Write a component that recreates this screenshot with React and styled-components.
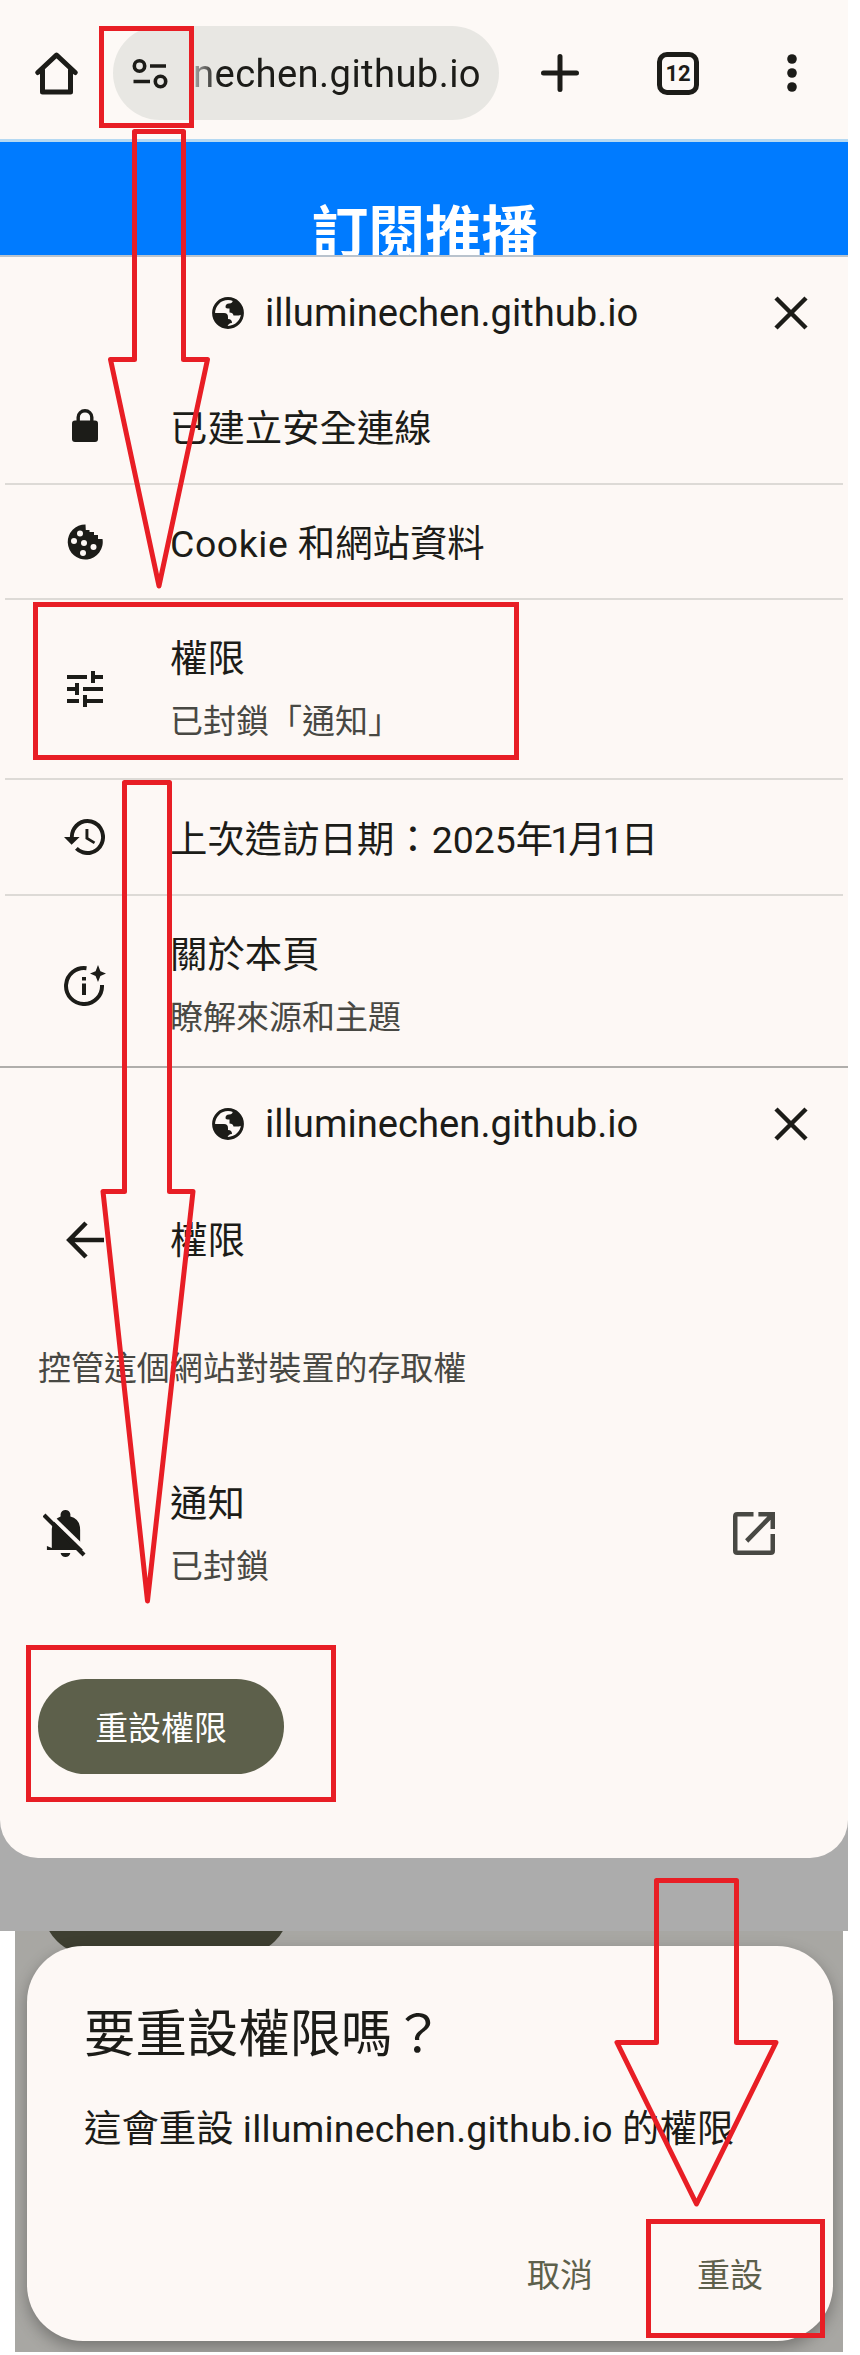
import React from "react";
import styled, { createGlobalStyle } from "styled-components";

const Global = createGlobalStyle`
  *{box-sizing:border-box}
  body{margin:0;background:#fff;font-family:Roboto,"Noto Sans CJK TC",sans-serif;color:#1c1c18}
  svg{display:block;flex:none}
`;
const Page = styled.main`position:relative;width:860px;height:2355px;overflow:hidden;background:#fff;padding-right:12px;`;
const Toolbar = styled.header`height:139px;background:#fdf9f6;display:flex;align-items:flex-start;padding:26px 0 0 35px;`;
const IconSlot = styled.span`display:block;flex:none;margin-left:${p => p.$l || 0}px;margin-top:${p => p.$t || 0}px;`;
const Omnibox = styled.div`width:386px;height:94px;border-radius:47px;background:#e8e7e3;margin-left:35px;display:flex;align-items:center;padding:2px 0 0 19px;flex:none;`;
const Url = styled.span`font-size:38.2px;line-height:46px;white-space:nowrap;letter-spacing:${p => p.$ls || 0}px;`;
const OmniUrl = styled(Url)`margin-left:25px;background:linear-gradient(90deg,#aaa 0,#1c1c18 26px);-webkit-background-clip:text;background-clip:text;color:transparent;`;
const Tabs = styled.div`width:42px;height:43px;border:5px solid #1c1c18;border-radius:10px;margin:26px 0 0 78px;display:flex;align-items:center;justify-content:center;font-size:22px;font-weight:700;flex:none;`;
const Banner = styled.section`height:118px;border-top:3px solid #b5d9f2;border-bottom:2px solid #b9c3cd;background:#007bff;overflow:hidden;text-align:center;padding:50px 0 0 2px;`;
const BannerTitle = styled.h1`margin:0;font-size:56.6px;line-height:84px;font-weight:700;color:#fff;`;
const Sheet = styled.section`background:#fdf8f5;height:${p => p.$h}px;`;
const Backdrop = styled.div`height:863px;background:#acacac;`;
const LowerSheet = styled(Sheet)`border-radius:0 0 38px 38px;`;
const SiteHeader = styled.div`height:112px;display:flex;align-items:center;padding:0 40px 0 212px;`;
const SiteUrl = styled(Url)`margin-left:21px;flex:1;`;
const Row = styled.div`height:${p => p.$h}px;display:flex;align-items:center;padding:${p => p.$t || 0}px 73px ${p => p.$b || 0}px ${p => p.$p || 63}px;`;
const Divider = styled.hr`height:2px;border:0;margin:0 5px;background:#dddad6;`;
const SheetEdge = styled(Divider)`margin:0;background:#b0aeab;`;
const RowIcon = styled.span`width:43px;margin-right:${p => p.$r || 64}px;flex:none;display:flex;justify-content:center;`;
const Texts = styled.div`flex:1;display:flex;flex-direction:column;gap:10px;padding-top:${p => p.$t || 0}px;margin-top:-1px;`;
const Label = styled.span`font-size:37.4px;line-height:56px;white-space:nowrap;padding-top:${p => p.$t || 0}px;`;
const Latin = styled.span`letter-spacing:.6px;`;
const SlimDigit = styled.span`margin:0 -3px;`;
const Sub = styled.span`font-size:33px;line-height:50px;color:#484843;white-space:nowrap;`;
const Note = styled.p`margin:0;padding:43px 0 0 38px;height:94px;font-size:32.95px;line-height:52px;color:#484843;`;
const ResetButton = styled.button`display:flex;align-items:center;justify-content:center;width:246px;height:95px;border:0;border-radius:47.5px;background:#5d604b;color:#fff;font:400 32.9px "Noto Sans CJK TC",sans-serif;margin:0 0 0 38px;padding:0 0 3px;`;
const Scrim = styled.section`position:relative;margin:0 5px 0 15px;height:421px;overflow:hidden;background:#a8a7a3;padding:15px 10px 0 12px;`;
const DimButton = styled.div`position:absolute;left:28px;top:-71px;width:246px;height:95px;border-radius:48px;background:#3e3f31;`;
const Dialog = styled.div`position:relative;height:395px;border-radius:56px;background:#fdf8f5;box-shadow:0 6px 16px rgba(0,0,0,.3);padding:51px 70px 0 57px;`;
const DialogTitle = styled.h2`margin:0;font-size:51.4px;line-height:76px;font-weight:400;`;
const DialogText = styled.p`margin:28px 0 0;font-size:37.4px;line-height:56px;white-space:nowrap;`;
const Host = styled.span`letter-spacing:.2px;`;
const Actions = styled.div`display:flex;justify-content:flex-end;gap:104px;margin-top:91px;`;
const Action = styled.button`border:0;background:none;padding:0;color:#5d604b;font:400 33px/50px "Noto Sans CJK TC",sans-serif;`;
const Frame = styled.div`position:absolute;border:5px solid #e81e25;left:${p => p.$x}px;top:${p => p.$y}px;width:${p => p.$w}px;height:${p => p.$h}px;`;
const Arrows = styled.svg`position:absolute;left:0;top:0;pointer-events:none;`;

const Ico = ({ w, h = w, vb = "0 0 24 24", children }) => (
  <svg width={w} height={h} viewBox={vb} fill="#1c1c18" preserveAspectRatio="none">{children}</svg>
);
const line = { fill: "none", stroke: "#1c1c18", strokeWidth: 5 };

const Home = () => <Ico w={43} vb="0 0 43 43"><path {...line} strokeLinecap="round" strokeLinejoin="round" d="M2.8 20.5L21.5 3L40.2 20.5M7.5 18V40H35.5V18" /></Ico>;
const Tune = () => <Ico w={36} h={30} vb="0 0 36 30"><g {...line} strokeWidth="3.6"><circle cx="7.5" cy="7" r="5.2" /><path d="M18 7H34M1.5 22.5H18" /><circle cx="28.5" cy="22.5" r="5.2" /></g></Ico>;
const Plus = () => <Ico w={38} vb="0 0 38 38"><path {...line} strokeLinecap="round" d="M19 2.5V35.5M2.5 19H35.5" /></Ico>;
const Dots = () => <Ico w={10} h={38} vb="0 0 10 38"><circle cx="5" cy="5" r="4.8" /><circle cx="5" cy="19" r="4.8" /><circle cx="5" cy="33" r="4.8" /></Ico>;
const Globe = () => (
  <Ico w={32} vb="0 0 32 32">
    <circle cx="16" cy="16" r="14.4" fill="none" stroke="#1c1c18" strokeWidth="3" />
    <path d="M1.5 16H12Q16 16 16 20V22Q20 22 20 26Q16 26 15 31A15 15 0 0 1 1.5 16Z" />
    <path d="M21 2Q21 6.5 17 6.5Q13.5 6.5 13.5 10Q13.5 11.5 17.5 11.5V15.5Q21 15.5 21.5 18.5H26Q28 19 31 16A15 15 0 0 0 21 2Z" />
  </Ico>
);
const Close = () => <Ico w={34} vb="0 0 34 34"><path {...line} strokeWidth="4.5" d="M2 2L32 32M32 2L2 32" /></Ico>;
const Lock = () => <Ico w={26} h={33} vb="0 0 26 33"><rect y="11.5" width="26" height="21.5" rx="3" /><path {...line} strokeWidth="3.4" d="M6.2 13V8.2a6.8 6.5 0 0 1 13.6 0V13" /></Ico>;
const Cookie = () => <Ico w={36} vb="0 0 36 36"><path d="M18.5 .5A17.5 17.5 0 1 0 35.5 15H31V11H27V8H22.5V6H18.8Z" /><g fill="#fdf8f5"><circle cx="13" cy="9.5" r="3" /><circle cx="7" cy="17" r="3" /><circle cx="17" cy="19" r="3" /><circle cx="26.5" cy="23" r="3" /><circle cx="16" cy="29" r="3" /></g></Ico>;
const Sliders = () => <Ico w={36} vb="3 3 18 18"><path d="M3 17v2h6v-2H3zM3 5v2h10V5H3zm10 16v-2h8v-2h-8v-2h-2v6h2zM7 9v2H3v2h4v2h2V9H7zm14 4v-2H11v2h10zm-6-4h2V7h4V5h-4V3h-2v6z" /></Ico>;
const History = () => <Ico w={41} h={36} vb="1 3 21 18"><path d="M13 3a9 9 0 0 0-9 9H1l3.9 3.9L9 12H6a7 7 0 1 1 2.05 4.95L6.64 18.36A9 9 0 1 0 13 3zm-1 5v5l4.28 2.54.72-1.21-3.5-2.08V8z" /></Ico>;
const Info = () => <Ico w={42} h={41} vb="0 0 42 41"><path {...line} strokeWidth="4" d="M22.5 3.2A18 18 0 1 0 38 20" /><path d="M34 0L36.4 6.2L42 8.6L36.4 11L34 17L31.6 11L26 8.6L31.6 6.2ZM18 12H22V15.5H18ZM18 18.5H22V30H18Z" /></Ico>;
const Back = () => <Ico w={38} vb="0 0 38 38"><path {...line} strokeWidth="4.6" d="M38 19H4M20 2L3.3 19L20 36" /></Ico>;
const BellOff = () => <Ico w={43} h={47} vb="0 0 44 47"><path d="M9 38V19Q10 9 18 6.5V4Q19 0 23 0Q27 0 28 4V6.5Q38 9 38 20V35L41 40H4V36ZM18 43H28Q27 47 23 47Q19 47 18 43Z" /><path d="M3 1L46 42" stroke="#fdf8f5" strokeWidth="4" /><path d="M1 5L42 45" stroke="#1c1c18" strokeWidth="4.2" /></Ico>;
const Launch = () => <Ico w={42} h={43} vb="0 0 43 43"><path fill="none" stroke="#484843" strokeWidth="4.6" strokeLinejoin="round" d="M21 2.3H4.3Q2.3 2.3 2.3 4.3V38.7Q2.3 40.7 4.3 40.7H38.7Q40.7 40.7 40.7 38.7V22" /><path fill="none" stroke="#484843" strokeWidth="4.6" d="M26 2.3H40.7V17M40 3L14 29" /></Ico>;

const Site = () => <SiteHeader><Globe /><SiteUrl>illuminechen.github.io</SiteUrl><Close /></SiteHeader>;

export default function App() {
  return (
    <Page>
      <Global />
      <Toolbar>
        <IconSlot $t={26}><Home /></IconSlot>
        <Omnibox><Tune /><OmniUrl $ls={0.4}>nechen.github.io</OmniUrl></Omnibox>
        <IconSlot $l={42} $t={28}><Plus /></IconSlot>
        <Tabs>12</Tabs>
        <IconSlot $l={88} $t={28}><Dots /></IconSlot>
      </Toolbar>
      <Banner><BannerTitle>訂閱推播</BannerTitle></Banner>
      <Sheet $h={811}>
        <Site />
        <Row $h={114} $b={2}><RowIcon><Lock /></RowIcon><Label $t={8}>已建立安全連線</Label></Row>
        <Divider />
        <Row $h={113}><RowIcon><Cookie /></RowIcon><Label $t={5}><Latin>Cookie</Latin> 和網站資料</Label></Row>
        <Divider />
        <Row $h={178}><RowIcon><Sliders /></RowIcon><Texts><Label>權限</Label><Sub>已封鎖「通知」</Sub></Texts></Row>
        <Divider />
        <Row $h={114}><RowIcon><History /></RowIcon><Label $t={6}>上次造訪日期：2025年<SlimDigit>1</SlimDigit>月<SlimDigit>1</SlimDigit>日</Label></Row>
        <Divider />
        <Row $h={170} $t={8}><RowIcon><Info /></RowIcon><Texts><Label>關於本頁</Label><Sub>瞭解來源和主題</Sub></Texts></Row>
        <SheetEdge />
      </Sheet>
      <Backdrop>
        <LowerSheet $h={790}>
          <Site />
          <Row $h={120}><RowIcon><Back /></RowIcon><Label $t={2}>權限</Label></Row>
          <Note>控管這個網站對裝置的存取權</Note>
          <Row $h={285} $b={7} $p={43}><RowIcon $r={84}><BellOff /></RowIcon><Texts $t={3}><Label>通知</Label><Sub>已封鎖</Sub></Texts><Launch /></Row>
          <ResetButton>重設權限</ResetButton>
        </LowerSheet>
      </Backdrop>
      <Scrim>
        <DimButton />
        <Dialog>
          <DialogTitle>要重設權限嗎？</DialogTitle>
          <DialogText>這會重設 <Host>illuminechen.github.io</Host> 的權限</DialogText>
          <Actions><Action>取消</Action><Action>重設</Action></Actions>
        </Dialog>
      </Scrim>
      <Frame $x={99} $y={26} $w={95} $h={102} />
      <Frame $x={33} $y={602} $w={486} $h={158} />
      <Frame $x={26} $y={1645} $w={310} $h={157} />
      <Frame $x={646} $y={2219} $w={179} $h={119} />
      <Arrows width="860" height="2355" fill="none" stroke="#e81e25" strokeWidth="5" strokeLinejoin="round">
        <path d="M134.5 131.5H183.5V359.5H207.5L159 586L110.5 359.5H134.5Z" />
        <path d="M124.5 782.5H169.5V1191.5H193L147.5 1601L103 1191.5H124.5Z" />
        <path d="M656.5 1880.5H736.5V2042.5H776L696.5 2204L617 2042.5H656.5Z" />
      </Arrows>
    </Page>
  );
}
